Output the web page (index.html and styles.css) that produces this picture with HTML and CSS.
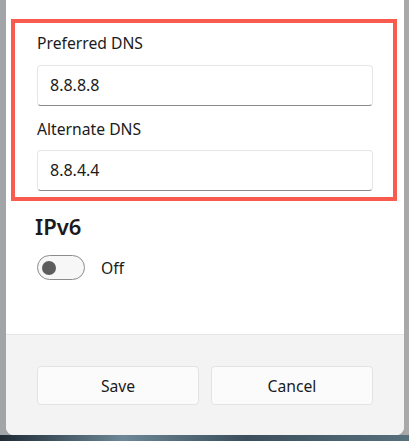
FILE: index.html
```html
<!DOCTYPE html>
<html lang="en">
<head>
  <meta charset="UTF-8" />
  <title>Edit DNS settings</title>
  <link rel="stylesheet" href="styles.css">
</head>
<body>
  <div class="backdrop">
    <div class="dialog">
      <div class="body">
        <div class="highlight">
          <label class="field-label">Preferred DNS</label>
          <div class="field">8.8.8.8</div>
          <label class="field-label second">Alternate DNS</label>
          <div class="field">8.8.4.4</div>
        </div>
        <h2 class="section">IPv6</h2>
        <div class="toggle-row">
          <span class="toggle"><span class="knob"></span></span>
          <span class="toggle-text">Off</span>
        </div>
      </div>
      <div class="footer">
        <button class="btn">Save</button>
        <button class="btn">Cancel</button>
      </div>
    </div>
    <div class="side"></div>
  </div>
  <div class="taskbar"></div>
</body>
</html>
```

FILE: styles.css
```css
body {
  margin: 0;
  background-color: #a2a5a8;
  font-family: 'Noto Sans', 'Open Sans', sans-serif;
  color: #1b1b1b;
  overflow: hidden;
}

.backdrop {
  display: flex;
  height: 435px;
  padding-left: 6px;
}

.dialog {
  width: 398px;
  height: 435px;
  background-color: #ffffff;
  border-radius: 0 0 8px 8px;
  display: flex;
  flex-direction: column;
  overflow: hidden;
}

.side {
  flex: 1;
  background-color: #a9a9a9;
}

.body {
  flex: 1;
  padding-top: 19px;
}

.highlight {
  margin: 0 7px 0 5px;
  border: 4px solid #f95c4e;
  padding: 10px 20px 6px 22px;
}

.field-label {
  display: block;
  font-size: 15.7px;
  line-height: 20px;
  height: 32px;
}

.field-label.second {
  margin-top: 13px;
  height: 31px;
}

.field {
  border: 1px solid #e6e6e6;
  border-bottom-color: #8a8a8a;
  border-radius: 4px;
  padding-left: 12px;
  font-size: 16px;
  line-height: 38px;
  box-sizing: border-box;
  height: 41px;
}

.section {
  margin: 10px 0 0 29px;
  font-size: 22px;
  font-weight: 600;
  line-height: 30px;
}

.toggle-row {
  display: flex;
  align-items: center;
  gap: 16px;
  margin: 14px 0 0 31px;
}

.toggle {
  width: 48px;
  height: 25px;
  border: 1px solid #8c8c8c;
  border-radius: 13px;
  background-color: #f7f7f7;
  box-sizing: border-box;
  display: flex;
  align-items: center;
  padding-left: 4px;
}

.knob {
  width: 14px;
  height: 14px;
  border-radius: 50%;
  background-color: #5d5d5d;
}

.toggle-text {
  font-size: 15.7px;
}

.footer {
  height: 101px;
  background-color: #f3f3f3;
  border-top: 1px solid #e5e5e5;
  box-sizing: border-box;
  display: flex;
  gap: 12px;
  padding: 31px 31px 0 31px;
}

.btn {
  flex: 1;
  height: 39px;
  background-color: #fbfbfb;
  border: 1px solid #e3e3e3;
  border-radius: 4px;
  font-family: inherit;
  font-size: 15.7px;
  color: #1b1b1b;
}

.taskbar {
  height: 6px;
  background: linear-gradient(90deg, #1f2b35, #6c8796 30%, #3b4e5b 60%, #56707c);
}
```
